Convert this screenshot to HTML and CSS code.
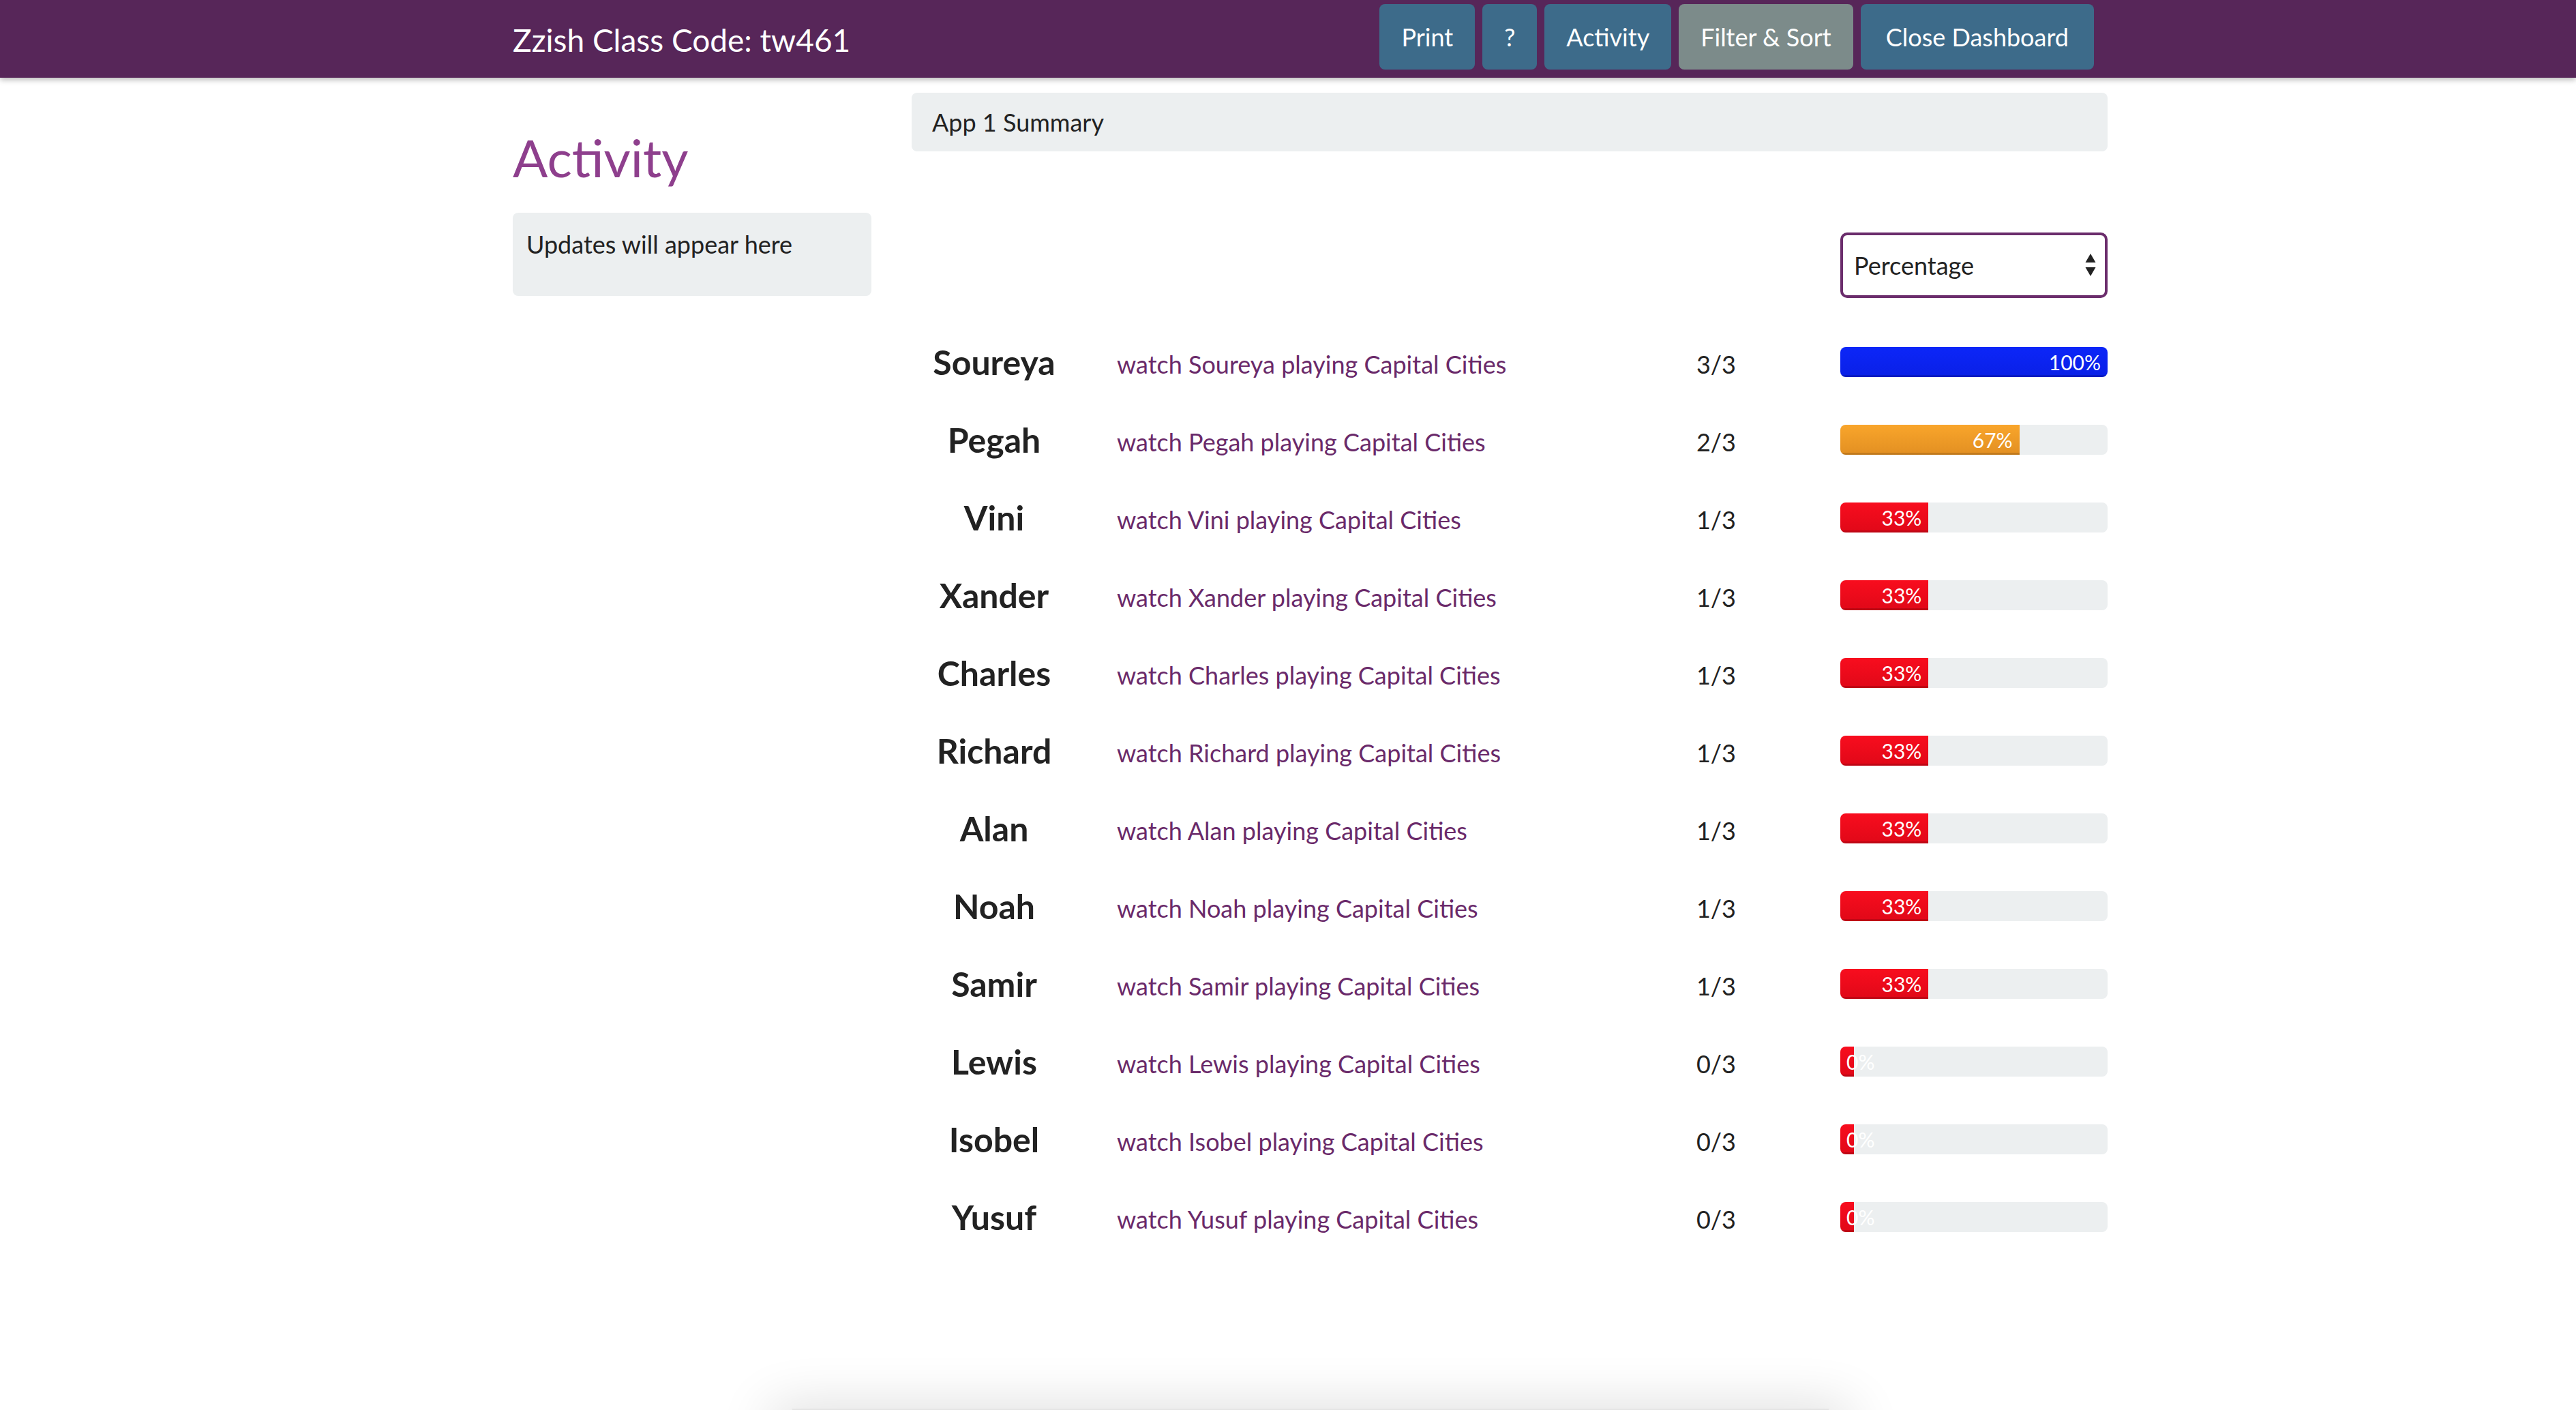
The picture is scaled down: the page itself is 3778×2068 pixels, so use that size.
FILE: index.html
```html
<!DOCTYPE html>
<html lang="en">
<head>
<meta charset="utf-8">
<title>Zzish Dashboard</title>
<link rel="stylesheet" href="styles.css">
</head>
<body>
<header class="topbar">
  <div class="topbar-inner">
    <div class="brand">Zzish Class Code: tw461</div>
    <nav class="nav">
      <button class="btn">Print</button>
      <button class="btn">?</button>
      <button class="btn">Activity</button>
      <button class="btn btn-muted">Filter &amp; Sort</button>
      <button class="btn btn-wide">Close Dashboard</button>
    </nav>
  </div>
</header>
<div class="page">
  <div class="layout">
    <aside class="side">
      <h1 class="side-title">Activity</h1>
      <div class="updates">Updates will appear here</div>
    </aside>
    <main class="main">
      <div class="summary">App 1 Summary</div>
      <div class="toolbar">
        <div class="select">
          <span>Percentage</span>
          <svg class="select-arrows" width="16" height="34" viewBox="0 0 16 34"><path d="M8 0 L15.5 13 L0.5 13 Z" fill="#222"/><path d="M0.5 20 L15.5 20 L8 33 Z" fill="#222"/></svg>
        </div>
      </div>
      <div class="rows">
        <div class="row"><div class="name">Soureya</div><a class="link" href="#">watch Soureya playing Capital Cities</a><div class="score">3/3</div><div class="track"><div class="fill blue" style="width:100%">100%</div></div></div>
        <div class="row"><div class="name">Pegah</div><a class="link" href="#">watch Pegah playing Capital Cities</a><div class="score">2/3</div><div class="track"><div class="fill orange" style="width:67%">67%</div></div></div>
        <div class="row"><div class="name">Vini</div><a class="link" href="#">watch Vini playing Capital Cities</a><div class="score">1/3</div><div class="track"><div class="fill red" style="width:33%">33%</div></div></div>
        <div class="row"><div class="name">Xander</div><a class="link" href="#">watch Xander playing Capital Cities</a><div class="score">1/3</div><div class="track"><div class="fill red" style="width:33%">33%</div></div></div>
        <div class="row"><div class="name">Charles</div><a class="link" href="#">watch Charles playing Capital Cities</a><div class="score">1/3</div><div class="track"><div class="fill red" style="width:33%">33%</div></div></div>
        <div class="row"><div class="name">Richard</div><a class="link" href="#">watch Richard playing Capital Cities</a><div class="score">1/3</div><div class="track"><div class="fill red" style="width:33%">33%</div></div></div>
        <div class="row"><div class="name">Alan</div><a class="link" href="#">watch Alan playing Capital Cities</a><div class="score">1/3</div><div class="track"><div class="fill red" style="width:33%">33%</div></div></div>
        <div class="row"><div class="name">Noah</div><a class="link" href="#">watch Noah playing Capital Cities</a><div class="score">1/3</div><div class="track"><div class="fill red" style="width:33%">33%</div></div></div>
        <div class="row"><div class="name">Samir</div><a class="link" href="#">watch Samir playing Capital Cities</a><div class="score">1/3</div><div class="track"><div class="fill red" style="width:33%">33%</div></div></div>
        <div class="row"><div class="name">Lewis</div><a class="link" href="#">watch Lewis playing Capital Cities</a><div class="score">0/3</div><div class="track"><div class="fill red" style="width:0%">0%</div></div></div>
        <div class="row"><div class="name">Isobel</div><a class="link" href="#">watch Isobel playing Capital Cities</a><div class="score">0/3</div><div class="track"><div class="fill red" style="width:0%">0%</div></div></div>
        <div class="row"><div class="name">Yusuf</div><a class="link" href="#">watch Yusuf playing Capital Cities</a><div class="score">0/3</div><div class="track"><div class="fill red" style="width:0%">0%</div></div></div>
      </div>
    </main>
  </div>
  <div class="fold"></div>
</div>
</body>
</html>
```
FILE: styles.css
```css
html, body {
  margin: 0;
  padding: 0;
  background: #ffffff;
  font-family: Lato, "Noto Sans", "Liberation Sans", sans-serif;
  color: #222222;
}

.topbar {
  position: relative;
  z-index: 1;
  height: 114px;
  background: #572659;
  box-shadow: 0 3px 8px rgba(0, 0, 0, 0.28);
}

.topbar-inner {
  margin-left: 752px;
  width: 2339px;
  height: 100%;
  display: flex;
  align-items: flex-start;
  justify-content: space-between;
}

.brand {
  margin-top: 31px;
  font-size: 46px;
  line-height: 55px;
  color: #ffffff;
}

.nav {
  display: flex;
  gap: 11px;
  margin-top: 6px;
  margin-right: 20px;
}

.btn {
  height: 96px;
  line-height: 96px;
  padding: 0 32px;
  border: none;
  border-radius: 8px;
  background: #3d6b8a;
  color: #ffffff;
  font-family: Lato, "Noto Sans", "Liberation Sans", sans-serif;
  font-size: 36px;
  cursor: pointer;
}

.btn-muted {
  background: #7c8b8a;
}

.btn-wide {
  padding: 0 37px;
}

.page {
  margin-left: 752px;
  width: 2339px;
}

.layout {
  display: grid;
  grid-template-columns: 526px 1754px;
  column-gap: 59px;
}

.side-title {
  margin: 75px 0 39px;
  font-size: 76px;
  line-height: 84px;
  font-weight: 400;
  color: #8e3f8d;
}

.updates {
  padding: 21px 20px 51px;
  border-radius: 8px;
  background: #eceff0;
  font-size: 36px;
  line-height: 50px;
}

.summary {
  margin-top: 22px;
  height: 86px;
  line-height: 86px;
  padding-left: 30px;
  border-radius: 8px;
  background: #eceff0;
  font-size: 36px;
}

.toolbar {
  display: flex;
  justify-content: flex-end;
  margin-top: 119px;
}

.select {
  box-sizing: border-box;
  width: 392px;
  height: 96px;
  padding: 0 13px 0 16px;
  border: 4px solid #6b2d6c;
  border-radius: 10px;
  display: flex;
  align-items: center;
  justify-content: space-between;
  font-size: 36px;
  background: #ffffff;
}

.select-arrows {
  display: block;
}

.rows {
  margin-top: 37px;
}

.row {
  display: grid;
  grid-template-columns: 242px 828px 220px 464px;
  height: 114px;
  align-items: center;
}

.name {
  text-align: center;
  font-size: 50px;
  line-height: 58px;
  font-weight: 700;
  color: #222222;
}

.link {
  padding-left: 59px;
  padding-top: 6px;
  font-size: 36px;
  line-height: 43px;
  color: #6a2a6a;
  text-decoration: none;
}

.score {
  padding-top: 6px;
  text-align: center;
  font-size: 36px;
  line-height: 43px;
}

.track {
  justify-self: end;
  width: 392px;
  height: 44px;
  border-radius: 8px;
  background: #eceff0;
  overflow: hidden;
  display: flex;
}

.fill {
  flex: none;
  box-sizing: border-box;
  min-width: 20px;
  padding: 0 10px 0 9px;
  text-align: right;
  white-space: nowrap;
  font-size: 30px;
  line-height: 44px;
  color: #ffffff;
  box-shadow: inset 0 -3px 0 rgba(0, 0, 0, 0.15);
}

.fill.blue {
  background: linear-gradient(#0c26f8, #0a20e6);
}

.fill.orange {
  background: linear-gradient(#f9a52b, #e28f22);
}

.fill.red {
  background: linear-gradient(#f80d1e, #e00818);
}

.fold {
  width: 1520px;
  height: 2px;
  margin: 224px auto 0;
  background: #e4e4e4;
  box-shadow: 0 30px 80px 30px rgba(0, 0, 0, 0.16);
}
```
